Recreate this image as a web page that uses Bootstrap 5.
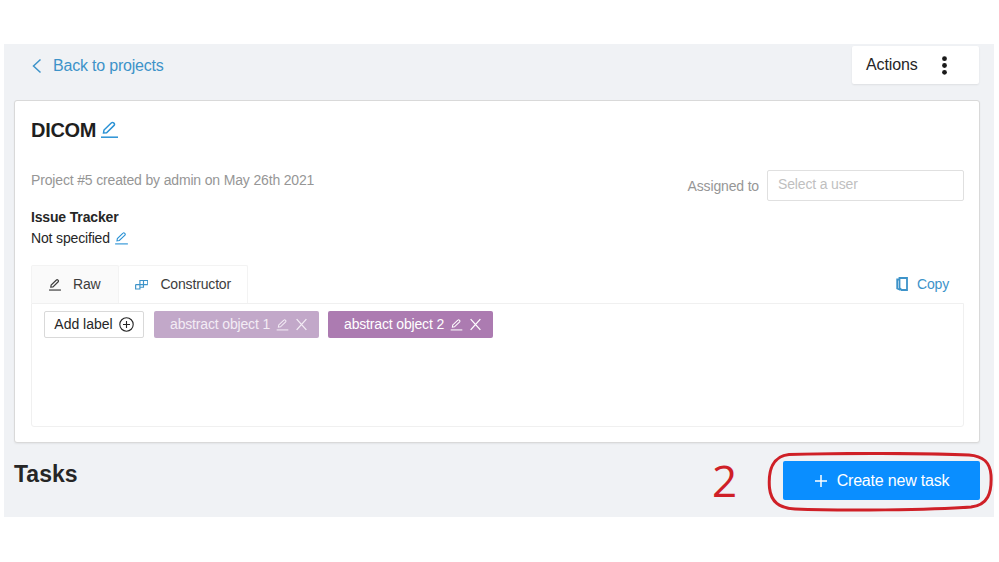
<!DOCTYPE html>
<html lang="en">
<head>
<meta charset="utf-8">
<title>DICOM</title>
<link href="https://cdn.jsdelivr.net/npm/bootstrap@5.3.0/dist/css/bootstrap.min.css" rel="stylesheet">
<style>
html,body{height:562px;overflow:hidden;background:#fff}
body{font-family:"Liberation Sans",Arial,sans-serif;font-size:14px;letter-spacing:-.16px;color:#262626}
.shell{margin:44px 5px 0 4px;height:473px;background:#f0f2f5;padding:2px 15px 0 10px;position:relative}
.topline{height:54px}
.backlink{color:#3d93c9;font-size:16px;letter-spacing:-.2px;text-decoration:none;margin-left:17px;margin-top:8px;gap:10px}
.actionsbox{width:127px;height:38px;background:#fff;font-size:16px;letter-spacing:-.1px;padding:0 31px 0 14px;box-shadow:0 1px 2px rgba(0,0,0,.08);border-radius:2px}
.maincard{height:343px;background:#fff;border:1px solid #d9d9d9;box-shadow:0 1px 2px rgba(0,0,0,.06);border-radius:3px;padding:16px 15px 15px 16px;width:966px}
.projname{font-size:20px;letter-spacing:-.3px;font-weight:700;color:#1f1f1f;line-height:26px;margin:0}
.editic{color:#2b92d5}
.inforow{margin-top:27px}
.meta{color:#969696;line-height:18px;padding-top:1px}
.assigned{color:#969696;padding-top:1px}
.userpick{width:197px;height:31px;border:1px solid #e0e0e0;border-radius:2px;padding:0 10px;color:#bfbfbf;line-height:27px;margin-left:8px}
.tracker{font-weight:700;line-height:20px;color:#262626;margin-top:6px}
.nospec{line-height:18px;margin-top:2px}
.tabtop{height:38px;margin-top:18px}
.tabitem{height:38px;padding:0 16px;color:#3d3d3d;border:1px solid #f3f3f3;border-bottom:0;border-radius:2px 2px 0 0}
.tabraw{background:#fafafa;width:88px;gap:11px}
.tabcon{background:#fff;width:129px;border-left:0;margin-bottom:-1px;position:relative;z-index:1;gap:12px}
.copylink{color:#3d93c9;gap:9px;padding-right:15px}
.labelpane{height:124px;border:1px solid #f0f0f0;border-radius:0 0 3px 3px;padding:7px 12px;gap:10px}
.addbtn{height:27px;width:100px;border:1px solid #d9d9d9;border-radius:2px;background:#fff;color:#262626;font-size:14px;gap:6px;padding:0}
.chip{height:27px;border-radius:2px;color:#fff;padding:0 5px 0 16px;gap:6px;width:165px}
.chip1{background:#c2a8c9;color:#f3ecf5}
.chip2{background:#ac7bb1;margin-left:-1px}
.bottomline{width:966px}
.taskhead{font-size:23px;letter-spacing:0;font-weight:700;color:#262626;line-height:26px;margin:18px 0 0}
.createbtn{width:197px;height:39px;background:#0a8eff;border-radius:2px;color:#fff;font-size:16px;letter-spacing:-.2px;border:0;gap:9px;margin-top:18px}
.ring{position:absolute;left:763px;top:408px;width:226px;height:60px;pointer-events:none}
.num2{position:absolute;left:708px;top:411px;font-size:44px;font-weight:500;line-height:50px;color:#cf2027;font-family:"Open Sans","Liberation Sans",sans-serif}
</style>
</head>
<body>
<div class="shell">
  <div class="topline d-flex justify-content-between align-items-start">
    <a class="backlink d-flex align-items-center" href="#">
      <svg width="12" height="18" viewBox="0 0 12 18" fill="none" stroke="#3d93c9" stroke-width="1.500"><path d="M9.500 2.500 2.500 9l7 6.500"/></svg>
      <span>Back to projects</span>
    </a>
    <div class="actionsbox d-flex justify-content-between align-items-center">
      <span>Actions</span>
      <svg width="7" height="19" viewBox="0 0 7 19" fill="#1a1a1a"><circle cx="3.500" cy="2.700" r="2.400"/><circle cx="3.500" cy="9.500" r="2.400"/><circle cx="3.500" cy="16.300" r="2.400"/></svg>
    </div>
  </div>
  <div class="maincard">
    <div class="d-flex align-items-center gap-1">
      <h1 class="projname">DICOM</h1>
      <svg class="editic" width="19" height="20" viewBox="0 0 19 20" fill="none" stroke="currentColor" stroke-width="1.500"><path d="M3.500 13 4 10 11.500 2.800a1.400 1.400 0 0 1 2 0l.6.6a1.400 1.400 0 0 1 0 2L6.600 12.700z"/><path d="M1 17.200h17"/></svg>
    </div>
    <div class="inforow d-flex justify-content-between align-items-start">
      <div class="meta">Project #5 created by admin on May 26th 2021</div>
      <div class="d-flex align-items-center">
        <span class="assigned">Assigned to</span>
        <div class="userpick">Select a user</div>
      </div>
    </div>
    <div class="tracker">Issue Tracker</div>
    <div class="nospec d-flex align-items-center gap-1">
      <span>Not specified</span>
      <svg class="editic" width="15" height="15" viewBox="0 0 19 20" fill="none" stroke="currentColor" stroke-width="1.500"><path d="M3.500 13 4 10 11.500 2.800a1.400 1.400 0 0 1 2 0l.6.6a1.400 1.400 0 0 1 0 2L6.600 12.700z"/><path d="M1 17.200h17"/></svg>
    </div>
    <div class="tabtop d-flex justify-content-between">
      <div class="d-flex">
        <div class="tabitem tabraw d-flex align-items-center">
          <svg width="14" height="14" viewBox="0 0 19 20" fill="none" stroke="#3d3d3d" stroke-width="1.700"><path d="M3.500 13 4 10 11.500 2.800a1.400 1.400 0 0 1 2 0l.6.6a1.400 1.400 0 0 1 0 2L6.600 12.700z"/><path d="M1 17.200h17"/></svg>
          <span>Raw</span>
        </div>
        <div class="tabitem tabcon d-flex align-items-center">
          <svg width="15" height="12" viewBox="0 0 15 12" fill="none" stroke="#3d93c9" stroke-width="1.300"><path d="M.7 5.500h13.600M.7 5.500v5h4.800v-5M9.500 1h4.800v4.500M5.500 5.500V1h4v7.500H5.500"/></svg>
          <span>Constructor</span>
        </div>
      </div>
      <div class="copylink d-flex align-items-center">
        <svg width="12" height="14" viewBox="0 0 12 14" fill="none" stroke="#3d93c9" stroke-width="1.800"><path d="M3.500 1h7.500v12H5.500L3.500 11z"/><path d="M3.500 2.500H1.200v9L4.500 13"/></svg>
        <span>Copy</span>
      </div>
    </div>
    <div class="labelpane d-flex align-items-start">
      <button class="addbtn d-flex align-items-center justify-content-center" type="button">
        <span>Add label</span>
        <svg width="15" height="15" viewBox="0 0 15 15" fill="none" stroke="#262626" stroke-width="1.100"><circle cx="7.500" cy="7.500" r="6.700"/><path d="M7.500 4v7M4 7.500h7"/></svg>
      </button>
      <div class="chip chip1 d-flex align-items-center">
        <span>abstract object 1</span>
        <svg width="13" height="14" viewBox="0 0 19 20" fill="none" stroke="currentColor" stroke-width="1.500"><path d="M3.500 13 4 10 11.500 2.800a1.400 1.400 0 0 1 2 0l.6.6a1.400 1.400 0 0 1 0 2L6.600 12.700z"/><path d="M1 17.200h17"/></svg>
        <svg width="13" height="13" viewBox="0 0 12 12" stroke="currentColor" stroke-width="1.200"><path d="M1.500 1l9 10M10.500 1l-9 10"/></svg>
      </div>
      <div class="chip chip2 d-flex align-items-center">
        <span>abstract object 2</span>
        <svg width="13" height="14" viewBox="0 0 19 20" fill="none" stroke="currentColor" stroke-width="1.500"><path d="M3.500 13 4 10 11.500 2.800a1.400 1.400 0 0 1 2 0l.6.6a1.400 1.400 0 0 1 0 2L6.600 12.700z"/><path d="M1 17.200h17"/></svg>
        <svg width="13" height="13" viewBox="0 0 12 12" stroke="currentColor" stroke-width="1.200"><path d="M1.500 1l9 10M10.500 1l-9 10"/></svg>
      </div>
    </div>
  </div>
  <div class="bottomline d-flex justify-content-between align-items-start">
    <h2 class="taskhead">Tasks</h2>
    <button class="createbtn d-flex align-items-center justify-content-center" type="button">
      <svg width="14" height="14" viewBox="0 0 14 14" stroke="#fff" stroke-width="1.500"><path d="M7 1v12M1 7h12"/></svg>
      <span>Create new task</span>
    </button>
  </div>
  <span class="num2">2</span>
  <svg class="ring" viewBox="0 0 226 60" fill="none" stroke="#cf2027" stroke-width="3"><path d="M22 2.500C70 1 160 1 202 3c14 1 21 7 22 20 1 18-3 30-20 32-40 3-130 4-176 2C12 56 4 50 2.500 36 1 18 6 4 22 2.500z"/></svg>
</div>
<script src="https://cdn.jsdelivr.net/npm/bootstrap@5.3.0/dist/js/bootstrap.bundle.min.js"></script>
</body>
</html>
